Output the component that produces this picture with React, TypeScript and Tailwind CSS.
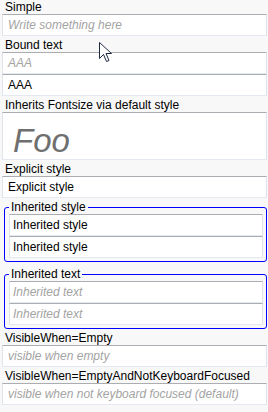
import React from 'react';

const font = { fontFamily: '"Liberation Sans", Arial, sans-serif' };

const Label = ({ text, first }: { text: string; first?: boolean }) => (
  <div className={`${first ? 'h-[14px]' : 'h-[16px]'} flex items-end pl-[3px] text-[12px] leading-[14px] text-black`}>
    {text}
  </div>
);

const TextBox = ({
  value,
  placeholder,
  tall,
  inner,
}: {
  value?: string;
  placeholder?: string;
  tall?: boolean;
  inner?: boolean;
}) => (
  <div
    className={`flex bg-white border border-t-[#abadb3] border-x-[#dfe3ea] border-b-[#e3e9ef] ${
      tall ? 'h-[48px] pl-[10px] items-end pb-[2px]' : inner ? 'h-[22px] pl-[3px] items-center' : 'h-[22px] pl-[5px] items-center'
    }`}
  >
    {value ? (
      <span className="text-[12px] text-black">{value}</span>
    ) : tall ? (
      <span className="text-[33px] italic text-[#6f6f6f] leading-none">{placeholder}</span>
    ) : (
      <span className="text-[12px] italic text-[#a3a3a3]">{placeholder}</span>
    )}
  </div>
);

const GroupBox = ({ header, children }: { header: string; children: React.ReactNode }) => (
  <div className="relative ml-[2px] pt-[6px]">
    <div className="border border-[#0000ff] rounded-[3px] pl-[4px] pr-[3px] pt-[6px] pb-[3px]">{children}</div>
    <span className="absolute left-[5px] top-[0px] bg-[#f8f8f8] px-[2px] text-[12px] leading-[13px] text-black">
      {header}
    </span>
  </div>
);

const Cursor = () => (
  <svg className="absolute left-[99px] top-[42px]" width="14" height="21" viewBox="0 0 14 21">
    <path
      d="M0.5 0.5 L0.5 16.5 L4.5 12.5 L7.5 19.5 L10 18.5 L7 11.5 L12.5 11.5 Z"
      fill="white"
      stroke="#1e2a44"
      strokeWidth="1"
      strokeLinejoin="round"
    />
  </svg>
);

export default function App() {
  return (
    <div className="relative w-[268px] h-[412px] bg-[#f8f8f8] overflow-hidden" style={font}>
      <div className="flex flex-col pl-[2px] pr-[1px]">
        <Label text="Simple" first />
        <TextBox placeholder="Write something here" />
        <Label text="Bound text" />
        <TextBox placeholder="AAA" />
        <TextBox value="AAA" />
        <Label text="Inherits Fontsize via default style" />
        <TextBox placeholder="Foo" tall />
        <Label text="Explicit style" />
        <TextBox value="Explicit style" />
        <div className="h-[3px]" />
        <GroupBox header="Inherited style">
          <TextBox value="Inherited style" inner />
          <TextBox value="Inherited style" inner />
        </GroupBox>
        <div className="h-[6px]" />
        <GroupBox header="Inherited text">
          <TextBox placeholder="Inherited text" inner />
          <TextBox placeholder="Inherited text" inner />
        </GroupBox>
        <Label text="VisibleWhen=Empty" />
        <TextBox placeholder="visible when empty" />
        <Label text="VisibleWhen=EmptyAndNotKeyboardFocused" />
        <TextBox placeholder="visible when not keyboard focused (default)" />
      </div>
      <Cursor />
    </div>
  );
}
